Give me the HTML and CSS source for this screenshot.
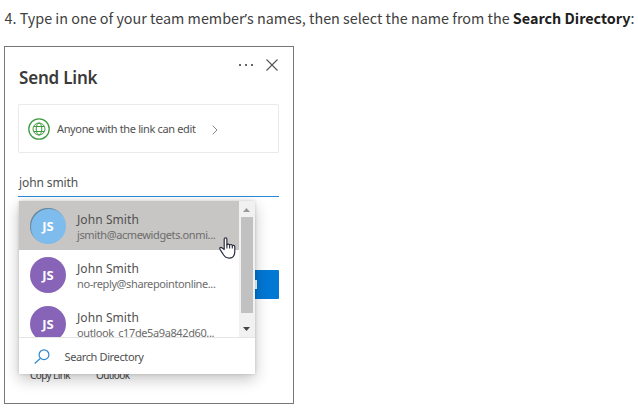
FILE: index.html
```html
<!DOCTYPE html>
<html lang="en">
<head>
<meta charset="utf-8">
<title>Send Link</title>
<link rel="stylesheet" href="styles.css">
</head>
<body>
<p class="step">4. Type in one of your team member<span class="apos">’</span>s names, then select the name from the <b>Search Directory</b>:</p>
<main class="dialog">
  <header class="head">
    <h1>Send Link</h1>
    <div class="actions">
      <svg class="dots" width="14" height="4" viewBox="0 0 14 4" fill="#666"><rect x="0" y="1" width="2" height="2"/><rect x="6" y="1" width="2" height="2"/><rect x="12" y="1" width="2" height="2"/></svg>
      <svg class="close" width="12" height="12" viewBox="0 0 12 12" stroke="#555" stroke-width="1.100"><path d="M.5.5l11 11M11.500.5l-11 11"/></svg>
    </div>
  </header>
  <button class="scope">
    <svg width="22" height="22" viewBox="0 0 22 22" fill="none" stroke="#3f9b41"><circle cx="11" cy="11" r="10.200" stroke-width="1.300"/><circle cx="11" cy="11" r="6"/><ellipse cx="11" cy="11" rx="2.800" ry="6"/><path d="M5.700 8.500h10.600M5.700 13.500h10.600"/></svg>
    <span class="scope-text">Anyone with the link can edit</span>
    <svg class="chev" width="6" height="10" viewBox="0 0 6 10" fill="none" stroke="#888"><path d="M.7.7L5 5 .7 9.300"/></svg>
  </button>
  <div class="field"><span class="query">john smith</span></div>
  <section class="below">
    <div class="send"><i></i></div>
    <div class="links"><span class="copy">Copy Link</span><span class="outlook">Outlook</span></div>
    <div class="picker">
      <div class="results">
        <div class="list">
          <div class="person selected">
            <span class="avatar blue"><b>JS</b></span>
            <div class="info"><span class="name">John Smith</span><span class="mail">jsmith@acmewidgets.onmi...</span></div>
          </div>
          <div class="person">
            <span class="avatar"><b>JS</b></span>
            <div class="info"><span class="name">John Smith</span><span class="mail">no-reply@sharepointonline...</span></div>
          </div>
          <div class="person">
            <span class="avatar"><b>JS</b></span>
            <div class="info"><span class="name">John Smith</span><span class="mail">outlook_c17de5a9a842d60...</span></div>
          </div>
        </div>
        <div class="scrollbar">
          <svg width="7" height="4" viewBox="0 0 7 4"><path d="M0 4L3.500 0 7 4z" fill="#999"/></svg>
          <div class="thumb"></div>
          <svg width="7" height="4" viewBox="0 0 7 4"><path d="M0 0h7L3.500 4z" fill="#444"/></svg>
        </div>
      </div>
      <div class="directory">
        <svg width="16" height="15" viewBox="0 0 16 15" fill="none" stroke="#2f86d0" stroke-width="1.200"><circle cx="10" cy="5.700" r="4.900"/><path d="M6.500 9.200L.7 14.500"/></svg>
        <span class="dir-text">Search Directory</span>
      </div>
      <svg class="cursor" width="17" height="22" viewBox="0 0 17 22"><path d="M5.200 12.500V2.300c0-2 2.700-2 2.700 0V8c.3-1.300 2.500-1.200 2.700.2.500-1.100 2.500-.9 2.700.6.700-.9 2.500-.5 2.500 1.200v4.200c0 4.200-2.200 6.900-5.700 6.900-3.300 0-4.800-1.600-6.200-4.300L1 12.300c-.9-1.700 1-2.600 2.200-1.300z" fill="#fff" stroke="#2c3040" stroke-width="1.200" stroke-linejoin="round"/><path d="M7.900 7.500v4M10.600 8v3.500M13.300 9v2.500" stroke="#2c3040" stroke-width="1.100"/></svg>
    </div>
  </section>
</main>
</body>
</html>
```
FILE: styles.css
```css
* { box-sizing: border-box; }
body { margin: 0; height: 412px; overflow: hidden; background: #fff; color: #505050; font-family: "Noto Sans", sans-serif; }
svg { display: block; flex: none; }
span { white-space: nowrap; }
.step { margin: 0; height: 46px; padding: 6px 0 0 4.5px; font: 14.36px/24px "Noto Sans CJK SC", sans-serif; color: #404040; white-space: nowrap; }
.step b { color: #202020; }
.apos { font-family: "Noto Sans", sans-serif; line-height: 1; }
.dialog { width: 290px; height: 358px; margin-left: 4px; border: 1px solid #777; padding: 0 14px 0 13px; overflow: hidden; }
.head { height: 57px; display: flex; justify-content: space-between; }
h1 { margin: 19px 0 0 1px; font: 600 17px/24px "Noto Sans", sans-serif; color: #3a3a3a; letter-spacing: -.2px; white-space: nowrap; }
.actions { display: flex; gap: 13px; padding-top: 12px; margin-right: 1px; }
.dots { margin-top: 4px; }
.scope { width: 261px; height: 49px; border: 1px solid #eaeaea; border-radius: 1px; background: #fff; padding: 0 0 0 9px; display: flex; align-items: center; color: #505050; }
.scope-text { font: 11px/16px "Noto Sans", sans-serif; letter-spacing: -.36px; margin-left: 7px; width: 139px; text-align: left; }
.chev { margin: 2px 0 0 16px; }
.field { width: 261px; height: 44px; border-bottom: 1px solid #2b88d8; padding-top: 22px; }
.query { display: block; font-size: 12px; line-height: 16px; letter-spacing: -.1px; padding-left: 1px; }
.below { position: relative; height: 206px; padding-top: 73px; }
.send { width: 60px; height: 29px; margin-left: 201px; border-radius: 1px; background: #0078d4; padding: 10px 0 0 36px; }
.send i { display: block; width: 2px; height: 9px; background: #fff; }
.links { display: flex; padding: 69px 0 0 12px; font-size: 10px; line-height: 14px; color: #444; letter-spacing: -.6px; }
.copy { width: 66px; }
.picker { position: absolute; left: 1px; top: 4px; width: 236px; height: 173px; background: #fff; box-shadow: 0 5px 14px rgba(0,0,0,.24), 0 0 3px rgba(0,0,0,.16); }
.results { height: 137px; display: flex; border-bottom: 1px solid #e5e5e5; overflow: hidden; }
.list { width: 220px; height: 136px; overflow: hidden; }
.person { height: 49px; display: flex; gap: 11px; padding: 7px 0 0 11px; }
.selected { background: #c8c6c4; }
.avatar { width: 36px; height: 36px; border-radius: 50%; background: #8764b8; color: #fff; display: flex; justify-content: center; align-items: center; font-size: 13px; }
.avatar b { font-weight: 700; }
.blue { background: #7dbcec; box-shadow: inset 1px 1px 0 #6d8799; }
.info { padding-top: 4px; }
.name, .mail { display: block; }
.name { font-size: 12px; line-height: 16px; letter-spacing: .08px; }
.mail { font-size: 11px; line-height: 16px; margin-top: -1px; color: #6c6c6c; letter-spacing: -.39px; }
.scrollbar { width: 16px; background: #f1f1f1; display: flex; flex-direction: column; align-items: center; padding: 7px 1px 6px 0; }
.thumb { width: 12px; height: 97px; background: #c1c1c1; margin: 5px 0 14px; }
.directory { height: 36px; display: flex; align-items: center; padding-left: 15px; }
.dir-text { font-size: 11px; line-height: 16px; letter-spacing: -.38px; margin: 2px 0 0 14.5px; }
.cursor { position: absolute; left: 200px; top: 36px; }
```
